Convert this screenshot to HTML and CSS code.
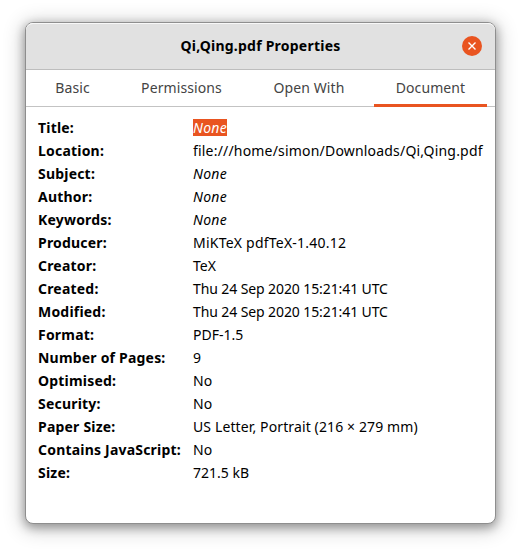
FILE: index.html
```html
<!DOCTYPE html>
<html lang="en">
<head>
<meta charset="utf-8">
<title>Qi,Qing.pdf Properties</title>
<link rel="stylesheet" href="styles.css">
</head>
<body>
<main class="window">
  <header class="titlebar">
    <h1 class="title">Qi,Qing.pdf Properties</h1>
    <button class="close" aria-label="Close">
      <svg width="20" height="20" viewBox="0 0 20 20"><circle cx="10" cy="10" r="10" fill="#e95420"/><path d="M6.5 6.5l7 7M13.5 6.5l-7 7" stroke="#fff" stroke-width="1.4"/></svg>
    </button>
  </header>
  <nav class="tabs">
    <a class="tab basic">Basic</a>
    <a class="tab permissions">Permissions</a>
    <a class="tab open-with">Open With</a>
    <a class="tab document active">Document</a>
  </nav>
  <dl class="properties">
    <dt>Title:</dt><dd><em class="selected">None</em></dd>
    <dt>Location:</dt><dd class="location">file:///home/simon/Downloads/Qi,Qing.pdf</dd>
    <dt>Subject:</dt><dd><em>None</em></dd>
    <dt>Author:</dt><dd><em>None</em></dd>
    <dt>Keywords:</dt><dd><em>None</em></dd>
    <dt>Producer:</dt><dd class="producer">MiKTeX pdfTeX-1.40.12</dd>
    <dt>Creator:</dt><dd>TeX</dd>
    <dt>Created:</dt><dd class="date">Thu 24 Sep 2020 15:21:41 UTC</dd>
    <dt>Modified:</dt><dd class="date">Thu 24 Sep 2020 15:21:41 UTC</dd>
    <dt>Format:</dt><dd>PDF-1.5</dd>
    <dt>Number of Pages:</dt><dd>9</dd>
    <dt>Optimised:</dt><dd>No</dd>
    <dt>Security:</dt><dd>No</dd>
    <dt>Paper Size:</dt><dd class="paper">US Letter, Portrait (216 × 279 mm)</dd>
    <dt>Contains JavaScript:</dt><dd>No</dd>
    <dt>Size:</dt><dd>721.5 kB</dd>
  </dl>
</main>
</body>
</html>
```
FILE: styles.css
```css
* { box-sizing: border-box; }
body {
  margin: 0;
  padding: 22px 25px 0;
  height: 552px;
  overflow: hidden;
  background: #fff;
  color: #000;
  font: 14px/23px "Noto Sans", "Open Sans", sans-serif;
}
.window {
  width: 471px;
  height: 502px;
  border: 1px solid #8e8e8e;
  border-radius: 8px;
  background: #fff;
  box-shadow: 0 3px 10px 1px rgba(0, 0, 0, .3), 0 3px 20px 3px rgba(0, 0, 0, .2);
}
.titlebar {
  display: grid;
  grid-template-columns: 33px 1fr 33px;
  align-items: center;
  height: 47px;
  border-top: 1px solid #f8f8f8;
  border-bottom: 1px solid #bdbdbd;
  border-radius: 7px 7px 0 0;
  background: #e1e1e1;
}
.title {
  grid-column: 2;
  margin: -2px 0 0;
  text-align: center;
  font-size: 14px;
  font-weight: 700;
  letter-spacing: .23px;
}
.close {
  width: 20px;
  height: 20px;
  padding: 0;
  border: 0;
  background: none;
}
.close svg { display: block; position: relative; top: -1px; }
.tabs {
  display: flex;
  gap: 7px;
  height: 37px;
  padding-left: 7px;
  border-bottom: 1px solid #c3c3c3;
}
.tab {
  height: 37px;
  padding-top: 6px;
  text-align: center;
  color: #444;
  letter-spacing: .1px;
}
.basic { width: 79px; }
.permissions { width: 125px; }
.open-with { width: 116px; }
.document { width: 113px; }
.active { border-bottom: 3px solid #e95420; }
.properties {
  display: grid;
  grid-template-columns: 155px 1fr;
  grid-auto-rows: 23px;
  margin: 9px 0 0;
  padding-left: 12px;
  white-space: nowrap;
}
dt { font-weight: 700; letter-spacing: .2px; }
dd { margin: 0; }
em { letter-spacing: .25px; }
.location { letter-spacing: .19px; }
.producer { letter-spacing: .22px; }
.date { letter-spacing: -.1px; }
.paper { letter-spacing: .12px; }
.selected {
  display: inline-block;
  height: 17px;
  line-height: 17px;
  background: #e95420;
  color: #fff;
}
```
